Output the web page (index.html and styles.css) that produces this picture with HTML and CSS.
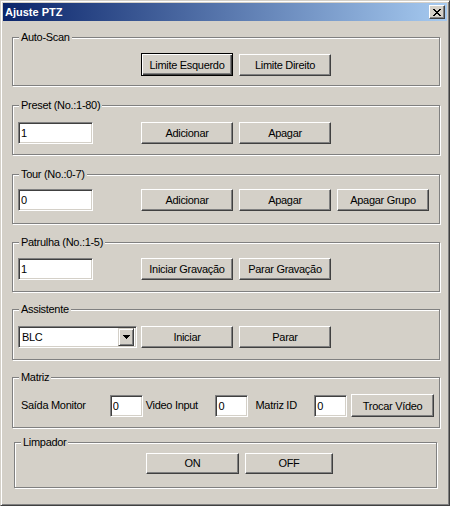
FILE: index.html
```html
<!DOCTYPE html>
<html>
<head>
<meta charset="utf-8">
<link rel="stylesheet" href="styles.css">
</head>
<body>
<div class="window">
  <div class="titlebar">
    <span class="title">Ajuste PTZ</span>
    <button class="close" type="button" aria-label="Fechar">
      <svg width="8" height="7" viewBox="0 0 8 7" shape-rendering="crispEdges"><path fill="#000" d="M0 0h2v1H0z M6 0h2v1H6z M1 1h2v1H1z M5 1h2v1H5z M2 2h4v1H2z M3 3h2v1H3z M2 4h4v1H2z M1 5h2v1H1z M5 5h2v1H5z M0 6h2v1H0z M6 6h2v1H6z"/></svg>
    </button>
  </div>
  <div class="client">
    <section class="group g1">
      <div class="legend">Auto-Scan</div>
      <div class="row r1">
        <button class="btn btn-default first-solo" type="button">Limite Esquerdo</button>
        <button class="btn" type="button">Limite Direito</button>
      </div>
    </section>

    <section class="group g2">
      <div class="legend">Preset (No.:1-80)</div>
      <div class="row r2">
        <input class="edit" value="1">
        <button class="btn after-edit" type="button">Adicionar</button>
        <button class="btn" type="button">Apagar</button>
      </div>
    </section>

    <section class="group g3">
      <div class="legend">Tour (No.:0-7)</div>
      <div class="row r3">
        <input class="edit" value="0">
        <button class="btn after-edit" type="button">Adicionar</button>
        <button class="btn" type="button">Apagar</button>
        <button class="btn" type="button">Apagar Grupo</button>
      </div>
    </section>

    <section class="group g4">
      <div class="legend">Patrulha (No.:1-5)</div>
      <div class="row r4">
        <input class="edit" value="1">
        <button class="btn after-edit" type="button">Iniciar Gravação</button>
        <button class="btn" type="button">Parar Gravação</button>
      </div>
    </section>

    <section class="group g5">
      <div class="legend">Assistente</div>
      <div class="row r5">
        <div class="combo">
          <span class="combo-text">BLC</span>
          <span class="combo-btn"><svg width="7" height="4" viewBox="0 0 7 4" shape-rendering="crispEdges"><path fill="#000" d="M0 0h7v1H0z M1 1h5v1H1z M2 2h3v1H2z M3 3h1v1H3z"/></svg></span>
        </div>
        <button class="btn after-combo" type="button">Iniciar</button>
        <button class="btn" type="button">Parar</button>
      </div>
    </section>

    <section class="group g6">
      <div class="legend">Matriz</div>
      <div class="row r6">
        <span class="lbl lbl1">Saída Monitor</span>
        <input class="edit small" value="0">
        <span class="lbl lbl2">Video Input</span>
        <input class="edit small" value="0">
        <span class="lbl lbl3">Matriz ID</span>
        <input class="edit small" value="0">
        <button class="btn btn-trocar" type="button">Trocar Vídeo</button>
      </div>
    </section>

    <section class="group g7">
      <div class="legend">Limpador</div>
      <div class="row r7">
        <button class="btn btn-on" type="button">ON</button>
        <button class="btn btn-off" type="button">OFF</button>
      </div>
    </section>
  </div>
</div>
</body>
</html>
```

FILE: styles.css
```css
* { box-sizing: border-box; }

html, body {
  margin: 0;
  padding: 0;
  background: #d4d0c8;
}

body {
  font-family: "Liberation Sans", Arial, sans-serif;
  font-size: 11px;
  letter-spacing: -0.3px;
  color: #000;
}

.window {
  width: 450px;
  height: 506px;
  background: #d4d0c8;
  border: 1px solid;
  border-color: #d4d0c8 #404040 #404040 #d4d0c8;
  box-shadow: inset 1px 1px 0 #fff, inset -1px -1px 0 #808080;
  padding: 2px;
  display: flex;
  flex-direction: column;
}

.titlebar {
  height: 18px;
  flex: none;
  background: linear-gradient(to right, #0a246a, #a6caf0);
  display: flex;
  align-items: center;
  padding: 0 2px 0 2px;
}

.title {
  flex: 1;
  color: #fff;
  font-weight: bold;
  font-size: 11px;
  letter-spacing: 0;
  line-height: 13px;
}

.close {
  width: 16px;
  height: 14px;
  padding: 0;
  margin: 0;
  background: #d4d0c8;
  border: 1px solid;
  border-color: #fff #404040 #404040 #fff;
  box-shadow: inset -1px -1px 0 #808080, inset 1px 1px 0 #d4d0c8;
  display: flex;
  align-items: center;
  justify-content: center;
}

.close svg { display: block; margin-left: -1px; }

.client {
  display: flex;
  flex-direction: column;
}

.group {
  display: flex;
  flex-direction: column;
  margin: 0 7px 0 9px;
  border: 1px solid #808080;
  box-shadow: 1px 1px 0 #fff, inset 1px 1px 0 #fff;
  padding: 0 5px;
}

.legend {
  align-self: flex-start;
  margin: -7px 0 0 1px;
  padding: 0 2px 0 2px;
  height: 13px;
  line-height: 13px;
  background: #d4d0c8;
}

.row {
  display: flex;
  align-items: center;
}

.g1 { margin-top: 16px; height: 49px; }
.g2 { margin-top: 19px; height: 50px; }
.g3 { margin-top: 19px; height: 50px; }
.g4 { margin-top: 18px; height: 50px; }
.g5 { margin-top: 17px; height: 51px; }
.g6 { margin-top: 17px; height: 51px; }
.g7 { margin-top: 14px; height: 46px; margin-left: 11px; margin-right: 10px; }

.r1 { margin-top: 9px; }
.r2 { margin-top: 10px; }
.r3 { margin-top: 8px; }
.r4 { margin-top: 9px; }
.r5 { margin-top: 10px; }
.r6 { margin-top: 10px; }
.r7 { margin-top: 4px; }

.btn {
  width: 92px;
  height: 22px;
  margin: 0 0 0 6px;
  padding: 0;
  background: #d4d0c8;
  border: 1px solid;
  border-color: #fff #404040 #404040 #fff;
  box-shadow: inset -1px -1px 0 #808080, inset 1px 1px 0 #d4d0c8;
  font: inherit;
  letter-spacing: inherit;
  color: #000;
  text-align: center;
  line-height: 18px;
}

.btn-default {
  height: 23px;
  border: 1px solid #000;
  box-shadow: inset 1px 1px 0 #fff, inset -1px -1px 0 #404040, inset -2px -2px 0 #808080;
}

.first-solo { margin-left: 123px; }
.after-edit { margin-left: 48px; }
.after-combo { margin-left: 4px; }

.edit {
  width: 75px;
  height: 22px;
  margin: 0;
  padding: 0 0 0 2px;
  background: #fff;
  border: 1px solid;
  border-color: #808080 #fff #fff #808080;
  box-shadow: inset 1px 1px 0 #404040, inset -1px -1px 0 #d4d0c8;
  font: inherit;
  letter-spacing: inherit;
  color: #000;
  outline: none;
}

.edit.small { width: 33px; }

.combo {
  width: 119px;
  height: 22px;
  background: #fff;
  border: 1px solid;
  border-color: #808080 #fff #fff #808080;
  box-shadow: inset 1px 1px 0 #404040, inset -1px -1px 0 #d4d0c8;
  display: flex;
  align-items: center;
  padding: 2px 2px 2px 2px;
}

.combo-text {
  flex: 1;
  padding-left: 1px;
  line-height: 16px;
}

.combo-btn {
  width: 16px;
  height: 18px;
  background: #d4d0c8;
  border: 1px solid;
  border-color: #d4d0c8 #404040 #404040 #d4d0c8;
  box-shadow: inset 1px 1px 0 #fff, inset -1px -1px 0 #808080;
  display: flex;
  align-items: center;
  justify-content: center;
}

.combo-btn svg { display: block; }

.lbl { line-height: 13px; }
.lbl1 { margin-left: 3px; width: 89px; }
.lbl2 { margin-left: 3px; width: 70px; }
.lbl3 { margin-left: 7px; width: 59px; }

.btn-trocar { width: 83px; height: 23px; margin-left: 4px; }

.btn-on { width: 93px; height: 21px; margin-left: 126px; line-height: 17px; }
.btn-off { width: 88px; height: 21px; margin-left: 6px; line-height: 17px; }
```
